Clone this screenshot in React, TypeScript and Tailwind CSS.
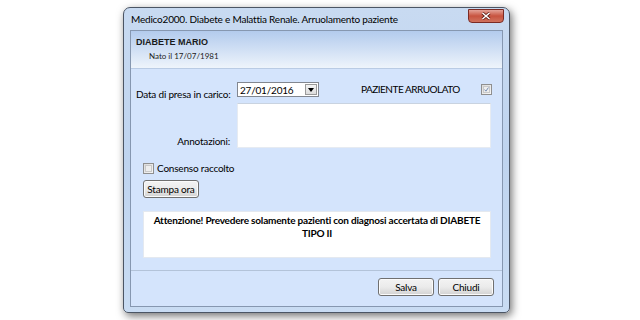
import React from 'react';

const ui = { fontFamily: 'Lato, "Liberation Sans", sans-serif', letterSpacing: '-0.2px' };
const arial = { fontFamily: '"Liberation Sans", Arial, sans-serif' };

const Check: React.FC<{ checked?: boolean }> = ({ checked }) => (
  <div className="w-[11px] h-[11px] border border-[#8f8f8f] bg-gradient-to-br from-[#dcdcdc] to-[#f6f6f6] flex items-center justify-center p-[1px]">
    <div className="w-full h-full border border-[#c9c9c9] bg-[#eeeeee] flex items-center justify-center">
      {checked && (
        <svg width="7" height="7" viewBox="0 0 7 7">
          <path d="M0.8 3.6 L2.7 5.8 L6.2 0.8" fill="none" stroke="#6a84ae" strokeWidth="1.3" />
        </svg>
      )}
    </div>
  </div>
);

const WinButton: React.FC<{ children: React.ReactNode; className?: string }> = ({ children, className }) => (
  <button
    className={
      'flex items-center justify-center rounded-[3px] border border-[#707070] bg-gradient-to-b from-[#f3f3f3] via-[#ebebeb] to-[#d2d2d2] text-[10px] text-black leading-none whitespace-nowrap shadow-[inset_0_0_0_1px_#fbfbfb] ' +
      (className || '')
    }
    style={ui}
  >
    {children}
  </button>
);

export default function App() {
  return (
    <div className="w-[640px] h-[320px] bg-white pl-[123px] pt-[7px] overflow-hidden whitespace-nowrap">
      <div className="w-[387px] h-[306px] rounded-t-[7px] rounded-b-[5px] border border-[#4b5564] bg-gradient-to-b from-[#c8daf1] via-[#bfd4ef] to-[#c9dcf3] shadow-[2px_3px_8px_rgba(0,0,0,0.55)] flex flex-col px-[6px] pb-[5px]">
        <div className="h-[22px] flex items-center justify-between shrink-0">
          <span className="text-[10px] text-black pl-[1px] pt-[1px]" style={ui}>
            Medico2000. Diabete e Malattia Renale. Arruolamento paziente
          </span>
          <div className="w-[36px] h-[14px] -mr-[1px] self-start mt-[1px] rounded-b-[4px] border border-[#7b2b24] bg-gradient-to-b from-[#e3a298] via-[#c7533f] to-[#d0725e] flex items-center justify-center">
            <svg width="10" height="8" viewBox="0 0 10 8">
              <path d="M1.5 1 L8.5 7 M8.5 1 L1.5 7" stroke="#5a1a14" strokeWidth="3" />
              <path d="M1.5 1 L8.5 7 M8.5 1 L1.5 7" stroke="#fff" strokeWidth="1.6" />
            </svg>
          </div>
        </div>
        <div className="flex-1 border border-[#8697b0] bg-[#d4e4fc] flex flex-col">
          <div className="h-[38px] shrink-0 border-b border-[#b9cbe4] bg-gradient-to-b from-[#b3cbed] to-[#eef4fb] pl-[5px] pt-[6px]">
            <div className="text-[9px] font-bold text-[#1a1a1a] leading-[11px]" style={arial}>DIABETE MARIO</div>
            <div className="text-[8px] text-[#222] leading-[11px] pl-[13px] mt-[3px]" style={{ fontFamily: 'Lato, sans-serif' }}>Nato il 17/07/1981</div>
          </div>
          <div className="flex-1 flex flex-col pl-[4px] pt-[13px] text-[10px] text-black" style={ui}>
            <div className="flex items-center h-[15px]">
              <span className="w-[102px] pl-[1px] pt-[10px]">Data di presa in carico:</span>
              <div className="w-[82px] h-[15px] border border-[#828790] bg-white flex items-center">
                <span className="flex-1 pl-[2px] leading-none">27/01/2016</span>
                <div className="w-[12px] h-[11px] mr-[1px] border border-[#9a9a9a] bg-gradient-to-b from-[#f4f4f4] to-[#dcdcdc] flex items-center justify-center">
                  <svg width="6" height="4" viewBox="0 0 6 4">
                    <path d="M0 0 H6 L3 4 Z" fill="#000" />
                  </svg>
                </div>
              </div>
              <span className="ml-[42px] tracking-[-0.5px]">PAZIENTE ARRUOLATO</span>
              <div className="ml-[21px]">
                <Check checked />
              </div>
            </div>
            <div className="flex items-end mt-[6px]">
              <span className="w-[95px] text-right -mb-[1px]">Annotazioni:</span>
              <div className="ml-[7px] w-[254px] h-[45px] bg-white border border-[#e6ebf2] border-t-[#c9d3e0]" />
            </div>
            <div className="flex items-center mt-[15px] pl-[8px] h-[11px]">
              <Check />
              <span className="ml-[3px]">Consenso raccolto</span>
            </div>
            <div className="flex pl-[8px] mt-[6px]">
              <WinButton className="w-[56px] h-[18px]">Stampa ora</WinButton>
            </div>
            <div className="ml-[8px] mt-[13px] w-[348px] h-[47px] bg-white border border-[#e4e9f0] pt-[2px] px-[3px] whitespace-normal">
              <p className="text-[10px] font-bold text-black text-center leading-[13px] tracking-[-0.2px]" style={{ fontFamily: 'Lato, sans-serif' }}>
                Attenzione! Prevedere solamente pazienti con diagnosi accertata di DIABETE TIPO II
              </p>
            </div>
          </div>
          <div className="h-[36px] shrink-0 border-t border-[#b3c3d9] bg-[#d4e4fc] flex items-start justify-end pt-[7px] pr-[8px] gap-[4px]">
            <WinButton className="w-[56px] h-[18px]">Salva</WinButton>
            <WinButton className="w-[56px] h-[18px]">Chiudi</WinButton>
          </div>
        </div>
      </div>
    </div>
  );
}
